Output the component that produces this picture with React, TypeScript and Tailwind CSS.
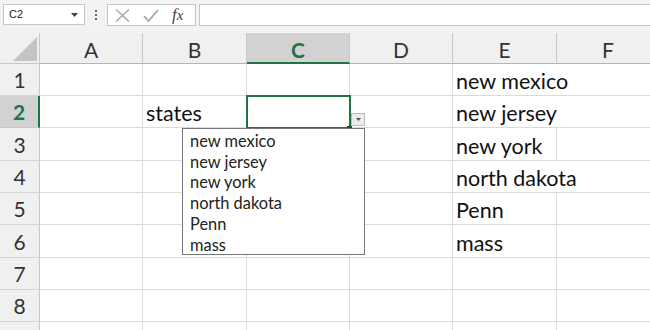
import React from "react";

const COLS = ["A", "B", "C", "D", "E", "F"];

// row heights follow the screenshot (rows are ~32.3px apart)
const ROWS = [1, 2, 3, 4, 5, 6, 7, 8, 9];

const cellText: Record<string, string> = {
    B2: "states",
    E1: "new mexico",
    E2: "new jersey",
    E3: "new york",
    E4: "north dakota",
    E5: "Penn",
    E6: "mass",
};

// text that spills into the next column hides that gridline
const overflowing = new Set(["E1", "E2", "E4"]);

const listItems = ["new mexico", "new jersey", "new york", "north dakota", "Penn", "mass"];

const FormulaBar = () => (
    <div className="h-[33px] flex items-start pt-[4px] bg-[#f3f3f3]">
        {/* Name box */}
        <div className="ml-[3px] w-[82px] h-[21px] bg-white border border-[#c6c6c6] flex items-center justify-between pl-[5px] pr-[6px]">
            <span className="text-[11px] text-[#222] font-['Liberation_Sans',sans-serif]">C2</span>
            <svg width="7" height="4" viewBox="0 0 7 4">
                <path d="M0 0 L7 0 L3.5 4 Z" fill="#444" />
            </svg>
        </div>
        {/* grip dots */}
        <div className="w-[22px] h-[21px] flex flex-col items-center justify-center gap-[2px]">
            <span className="w-[2px] h-[2px] bg-[#666]" />
            <span className="w-[2px] h-[2px] bg-[#666]" />
            <span className="w-[2px] h-[2px] bg-[#666]" />
        </div>
        {/* cancel / enter / function */}
        <div className="w-[89px] h-[22px] bg-white border border-[#c6c6c6] flex items-center pl-[7px] gap-[13px]">
            <svg width="15" height="13" viewBox="0 0 15 13">
                <path d="M1 0.5 L14 12.5 M14 0.5 L1 12.5" stroke="#a6a6a6" strokeWidth="1.4" fill="none" />
            </svg>
            <svg width="16" height="13" viewBox="0 0 16 13">
                <path d="M1 7 L5.5 12 L15 1" stroke="#a6a6a6" strokeWidth="1.8" fill="none" />
            </svg>
            <span className="text-[17px] italic text-[#444] font-['Liberation_Serif',serif] leading-none -mt-[2px]">
                f<span className="text-[15px]">x</span>
            </span>
        </div>
        {/* formula input */}
        <div className="ml-[3px] flex-1 h-[22px] bg-white border border-[#c6c6c6] border-r-0" />
    </div>
);

const Corner = () => (
    <div className="bg-[#f0f0f0] border-r border-b border-[#c8c8c8] relative">
        <svg width="40" height="31" viewBox="0 0 40 31" className="absolute left-0 top-0">
            <path d="M13 28 L37 28 L37 4 Z" fill="#c4c4c4" />
        </svg>
    </div>
);

export default function App() {
    return (
        <div className="w-[650px] h-[330px] overflow-hidden bg-white relative font-['Lato',sans-serif]">
            <FormulaBar />

            <div className="grid grid-cols-[40px_103px_104px_103px_103px_104px_103px] grid-rows-[31px_32px_32px_33px_32px_32px_33px_32px_32px_32px]">
                {/* header row */}
                <Corner />
                {COLS.map((c) =>
                    c === "C" ? (
                        <div
                            key={c}
                            className="bg-[#d2d2d2] border-r border-[#c8c8c8] border-b-2 border-b-[#217346] flex items-center justify-center pt-[3px] text-[21px] font-bold text-[#217346] leading-none"
                        >
                            {c}
                        </div>
                    ) : (
                        <div
                            key={c}
                            className="bg-[#f0f0f0] border-r border-b border-[#c8c8c8] border-b-[#b5b5b5] flex items-center justify-center pt-[3px] text-[21px] text-[#333] leading-none"
                        >
                            {c}
                        </div>
                    )
                )}

                {ROWS.map((r) => (
                    <React.Fragment key={r}>
                        {r === 2 ? (
                            <div className="bg-[#d2d2d2] border-b border-[#c8c8c8] border-r-2 border-r-[#217346] flex items-center justify-center text-[21px] font-bold text-[#217346] leading-none">
                                {r}
                            </div>
                        ) : (
                            <div className="bg-[#f0f0f0] border-b border-[#d4d4d4] border-r border-r-[#c8c8c8] flex items-center justify-center text-[21px] text-[#333] leading-none">
                                {r < 9 ? r : null}
                            </div>
                        )}
                        {COLS.map((c) => {
                            const id = `${c}${r}`;
                            const text = cellText[id];
                            return (
                                <div
                                    key={id}
                                    className={`relative border-b border-[#dadada] flex items-end pl-[3px] pb-[2px] ${
                                        overflowing.has(id) ? "" : "border-r"
                                    }`}
                                >
                                    {text && (
                                        <span className="whitespace-nowrap text-[21.5px] leading-[24px] text-[#111] relative z-[1]">
                                            {text}
                                        </span>
                                    )}
                                    {id === "C2" && (
                                        <>
                                            <div className="absolute -left-[1px] -top-[1px] w-[105px] h-[34px] border-2 border-[#217346] z-10" />
                                            <div className="absolute left-[100px] top-[30px] w-[5px] h-[4px] bg-[#1e4d2b] z-10" />
                                            {/* validation dropdown button */}
                                            <div className="absolute left-[104px] top-[17px] w-[14px] h-[13px] bg-[#ececec] border border-[#bdbdbd] flex items-center justify-center z-20">
                                                <svg width="5" height="3" viewBox="0 0 5 3">
                                                    <path d="M0 0 L5 0 L2.5 3 Z" fill="#555" />
                                                </svg>
                                            </div>
                                            {/* validation list */}
                                            <div className="absolute -left-[65px] top-[32px] w-[183px] h-[127px] bg-white border border-[#767676] pt-[2px] pl-[7px] z-30">
                                                {listItems.map((item) => (
                                                    <div key={item} className="text-[16.4px] leading-[20.7px] text-[#222] whitespace-nowrap">
                                                        {item}
                                                    </div>
                                                ))}
                                            </div>
                                        </>
                                    )}
                                </div>
                            );
                        })}
                    </React.Fragment>
                ))}
            </div>
        </div>
    );
}
